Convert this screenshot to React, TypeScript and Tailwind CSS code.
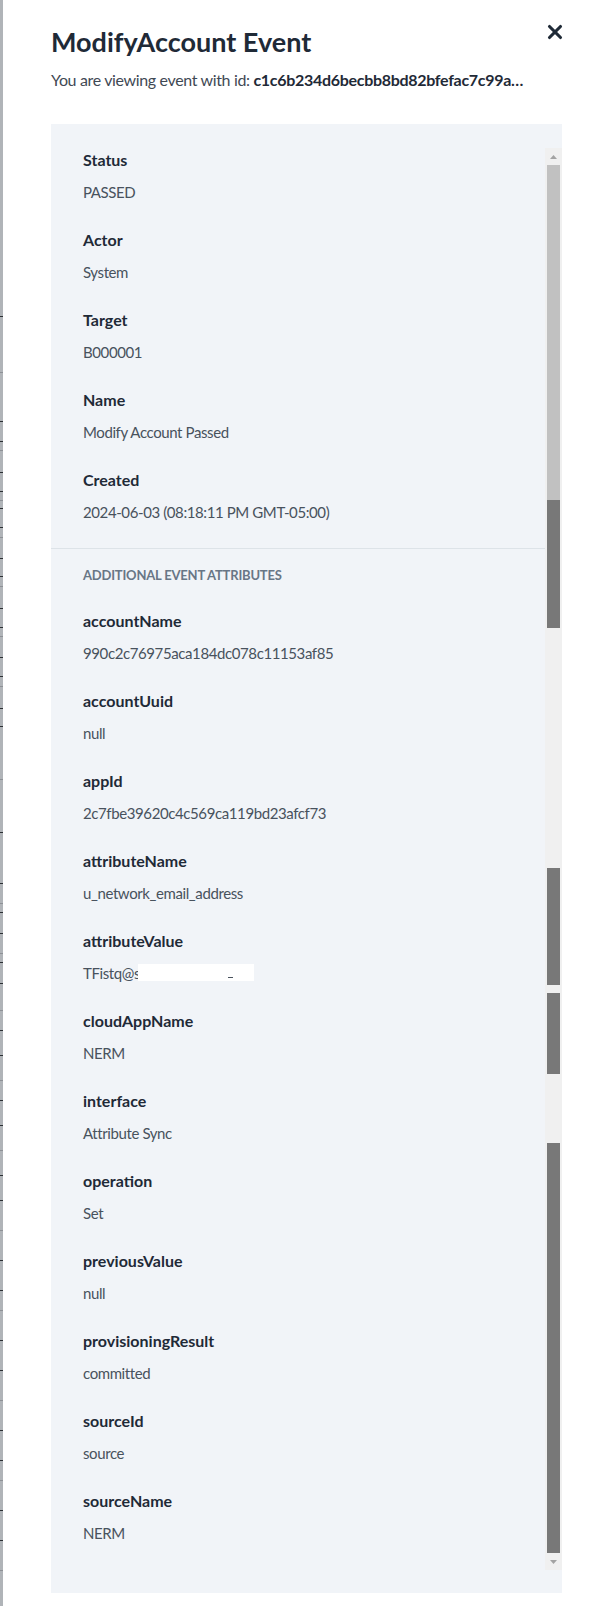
import { X } from "lucide-react";

const summary = [
  { label: "Status", value: "PASSED" },
  { label: "Actor", value: "System" },
  { label: "Target", value: "B000001" },
  { label: "Name", value: "Modify Account Passed" },
  { label: "Created", value: "2024-06-03 (08:18:11 PM GMT-05:00)" },
];

const attributes = [
  { label: "accountName", value: "990c2c76975aca184dc078c11153af85" },
  { label: "accountUuid", value: "null" },
  { label: "appId", value: "2c7fbe39620c4c569ca119bd23afcf73" },
  { label: "attributeName", value: "u_network_email_address" },
  { label: "attributeValue", value: "TFistq@s", redacted: true },
  { label: "cloudAppName", value: "NERM" },
  { label: "interface", value: "Attribute Sync" },
  { label: "operation", value: "Set" },
  { label: "previousValue", value: "null" },
  { label: "provisioningResult", value: "committed" },
  { label: "sourceId", value: "source" },
  { label: "sourceName", value: "NERM" },
];

// scrollbar pieces, top to bottom (the screenshot caught it mid-repaint)
const scrollPieces = [
  { h: 335, c: "light" },
  { h: 128, c: "dark" },
  { h: 240, c: "track" },
  { h: 117, c: "dark" },
  { h: 8, c: "track" },
  { h: 81, c: "dark" },
  { h: 69, c: "track" },
  { h: 410, c: "dark" },
];

const ticks = [
  316, 372, 421, 441, 450, 472, 491, 500, 508, 527, 537, 558, 576, 586, 608, 627, 636, 657,
  676, 686, 708, 726, 779, 832, 883, 903, 912, 933, 953, 962, 983, 1010, 1030, 1055, 1080,
  1100, 1125, 1150, 1175, 1200, 1230, 1260, 1290, 1310, 1340, 1370, 1400, 1430, 1460, 1480,
  1510, 1540, 1570,
];

function Field({ label, value, redacted }: { label: string; value: string; redacted?: boolean }) {
  return (
    <div className="mb-6 px-8">
      <div className="text-[16px] leading-6 font-bold text-[#1f2a37]">{label}</div>
      <div className="mt-2 text-[15px] leading-6 tracking-[-0.4px] text-[#48525d]">
        {redacted ? (
          <span className="relative inline-block">
            {value}
            <span className="absolute left-[55px] top-[3px] h-[17px] w-[116px] bg-white">
              <span className="absolute left-[90px] top-[13px] h-px w-[5px] bg-[#48525d]" />
            </span>
          </span>
        ) : (
          value
        )}
      </div>
    </div>
  );
}

function Arrow({ up }: { up?: boolean }) {
  return (
    <div className="flex h-[17px] items-center justify-center">
      <svg width="7" height="4" viewBox="0 0 7 4">
        <polygon points={up ? "3.5,0 7,4 0,4" : "0,0 7,0 3.5,4"} fill="#a3a3a3" />
      </svg>
    </div>
  );
}

export default function App() {
  return (
    <div
      className="flex h-[1606px] w-[597px] overflow-hidden bg-white"
      style={{ fontFamily: "Lato, 'Open Sans', sans-serif" }}
    >
      {/* sliver of the page behind the modal */}
      <svg width="3" height="1606" className="shrink-0">
        <rect width="3" height="1606" fill="#b0b4b8" />
        {ticks.map((y, i) => (
          <rect key={y} x="0" y={y} width="3" height="1" fill={i % 3 === 1 ? "#8d9196" : "#2b2f33"} />
        ))}
      </svg>

      <div className="flex flex-1 flex-col pl-[48px] pr-[35px]">
        {/* Header */}
        <div className="pt-6">
          <div className="flex items-start justify-between">
            <h1 className="text-[27px] leading-9 font-bold text-[#1f2a37]">ModifyAccount Event</h1>
            <button className="mr-[-1px] text-[#1f2a37]">
              <X size={22} strokeWidth={3.4} className="-mt-[3px] -mr-[3px]" />
            </button>
          </div>
          <p className="mt-2 text-[16px] leading-6 tracking-[-0.35px] text-[#3f4954]">
            You are viewing event with id:{" "}
            <span className="font-bold tracking-[-0.3px] text-[#1f2a37]">c1c6b234d6becbb8bd82bfefac7c99a…</span>
          </p>
        </div>

        {/* Event detail panel */}
        <div className="mt-8 h-[1469px] bg-[#f1f4f8] pt-6">
          <div className="flex h-[1422px]">
            <div className="flex-1 overflow-hidden">
              {summary.map((f) => (
                <Field key={f.label} label={f.label} value={f.value} />
              ))}
              <div className="border-t border-[#dde3e8]" />
              <div className="px-8 pt-[18px] pb-[26px] text-[13px] leading-4 font-bold tracking-[-0.2px] uppercase text-[#687686]">
                Additional Event Attributes
              </div>
              {attributes.map((f) => (
                <Field key={f.label} label={f.label} value={f.value} redacted={f.redacted} />
              ))}
            </div>

            {/* scrollbar */}
            <div className="flex w-[17px] flex-col bg-[#f0f0f0]">
              <Arrow up />
              {scrollPieces.map((p, i) => (
                <div key={i} className="px-[2px]" style={{ height: p.h }}>
                  {p.c === "light" && <div className="h-full bg-[#c1c1c1]" />}
                  {p.c === "dark" && <div className="h-full bg-[#787878]" />}
                </div>
              ))}
              <Arrow />
            </div>
          </div>
        </div>
      </div>
    </div>
  );
}
